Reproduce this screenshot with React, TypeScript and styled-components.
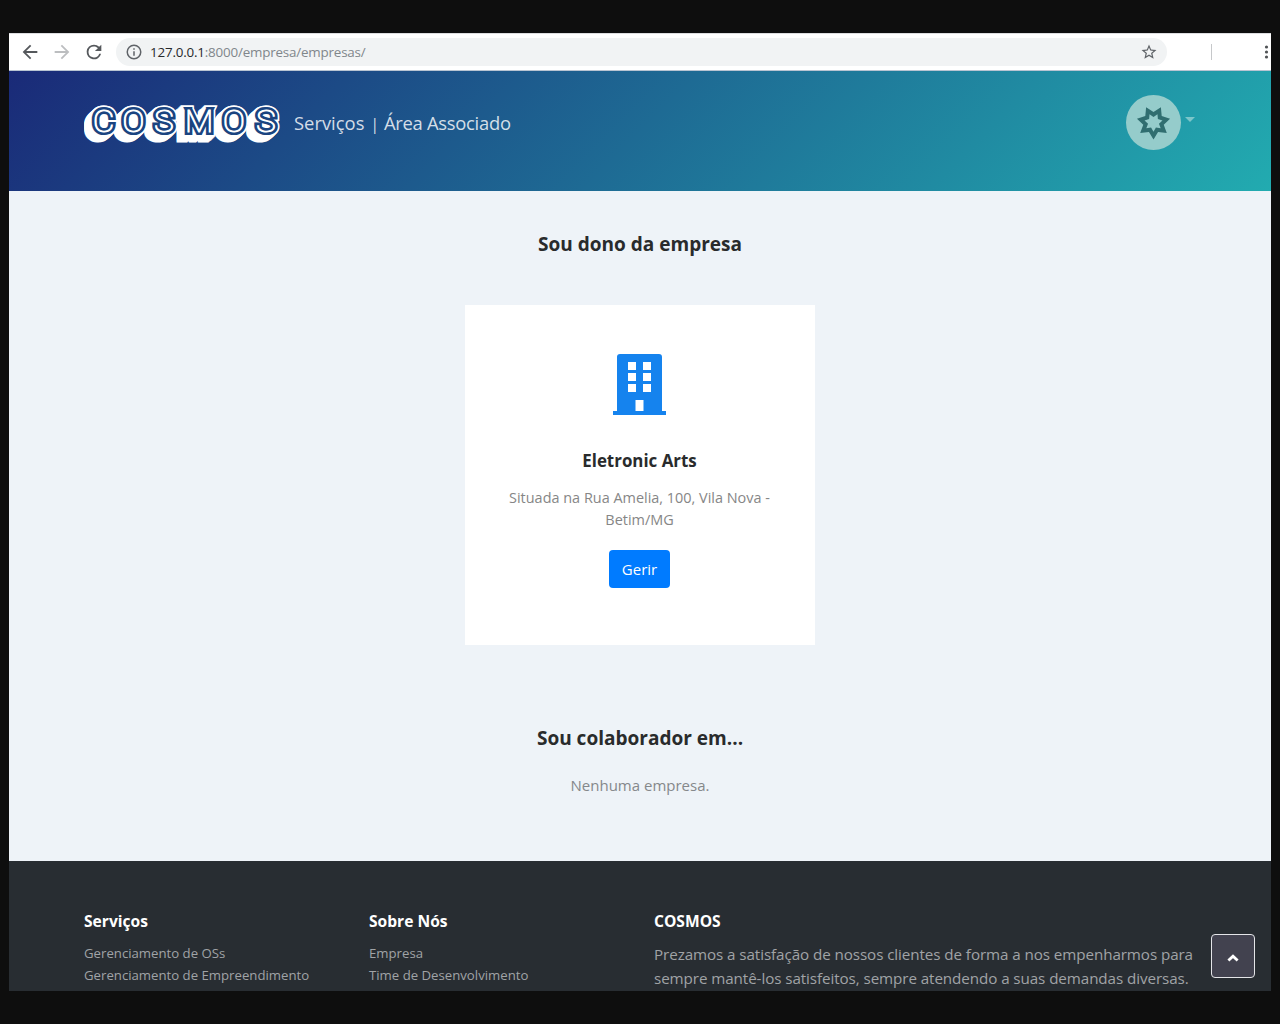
import React from "react";
import styled, { createGlobalStyle } from "styled-components";

const GlobalStyle = createGlobalStyle`
  *, *::before, *::after { box-sizing: border-box; }
  html, body { margin: 0; padding: 0; background: #0e0e0e; }
  body { font-family: "Open Sans", "Noto Sans", sans-serif; overflow: hidden; }
  h2, h3, h4, p, ul { margin: 0; padding: 0; font-weight: inherit; }
  ul { list-style: none; }
  a { color: inherit; text-decoration: none; }
  svg { display: block; }
`;

const Desktop = styled.div`
  height: 1024px;
  padding: 33px 9px;
  background: #0e0e0e;
`;

const Browser = styled.div`
  position: relative;
  display: flex;
  flex-direction: column;
  height: 958px;
  overflow: hidden;
  background: #eef3f8;
`;

const Toolbar = styled.div`
  display: flex;
  align-items: center;
  flex: none;
  height: 38px;
  padding-left: 10px;
  background: #fff;
  border-top: 1px solid #dcdddf;
  border-bottom: 1px solid #b9c4d2;
`;

const NavButton = styled.span<{ $muted?: boolean }>`
  width: 32px;
  color: ${(p) => (p.$muted ? "#bcbec0" : "#55585c")};
`;

const AddressBar = styled.div`
  display: flex;
  align-items: center;
  width: 1051px;
  height: 28px;
  margin-left: 1px;
  padding: 0 9px;
  border-radius: 14px;
  background: #f1f3f4;
  color: #5f6368;
`;

const Url = styled.span`
  flex: 1;
  margin-left: 7px;
  font-size: 13.4px;
  line-height: 20px;
  color: #80868b;
  letter-spacing: -0.19px;
`;

const Host = styled.span`
  color: #27292d;
`;

const Divider = styled.span`
  width: 1px;
  height: 16px;
  margin: 0 49px 0 44px;
  background: #c6c8ca;
`;

const Header = styled.header`
  display: flex;
  align-items: flex-start;
  flex: none;
  height: 120px;
  padding: 24px 76px 0 75px;
  background: linear-gradient(135deg, #1a2a78 0%, #22abb0 100%);
`;

const Brand = styled.a`
  margin-top: 6px;
`;

const HeaderNav = styled.nav`
  display: flex;
  align-items: center;
  flex: 1;
  margin: 13px 0 0 10px;
  font-size: 18.4px;
  line-height: 28px;
  color: rgba(255, 255, 255, 0.82);
`;

const NavLink = styled.a<{ $tight?: boolean }>`
  letter-spacing: ${(p) => (p.$tight ? "-0.28px" : "0")};
`;

const NavSeparator = styled.span`
  margin: 2px 5px 0 6px;
  font-size: 15.5px;
`;

const Account = styled.div`
  display: flex;
  align-items: center;
  gap: 4px;
`;

const Avatar = styled.div`
  display: flex;
  align-items: center;
  justify-content: center;
  width: 55px;
  height: 55px;
  border-radius: 50%;
  background: #95cccb;
`;

const Caret = styled.span`
  margin-top: -6px;
  border: 5px solid transparent;
  border-top-color: #7cc6ca;
  border-bottom: 0;
`;

const Main = styled.main`
  display: flex;
  flex-direction: column;
  align-items: center;
  flex: none;
  height: 670px;
  padding-top: 38px;
  background: #eef3f8;
`;

const SectionTitle = styled.h2`
  font-size: 19.05px;
  line-height: 30px;
  font-weight: 700;
  color: #292b2c;
`;

const Card = styled.article`
  display: flex;
  flex-direction: column;
  align-items: center;
  width: 350px;
  height: 340px;
  margin: 46px 0 78px;
  padding: 49px 41px 0 40px;
  background: #fff;
  text-align: center;
`;

const CardTitle = styled.h3`
  margin: 33px 0 13px;
  font-size: 16.9px;
  line-height: 26px;
  font-weight: 700;
  color: #292b2c;
`;

const CardText = styled.p`
  font-size: 14.45px;
  line-height: 22px;
  color: #868686;
  white-space: nowrap;
`;

const Button = styled.button`
  height: 38px;
  width: 61px;
  margin-top: 19px;
  padding: 0;
  border: 0;
  border-radius: 4px;
  background: #007bff;
  color: #fff;
  font: 400 15px/38px "Open Sans", sans-serif;
`;

const EmptyNote = styled.p`
  margin-top: 20px;
  font-size: 15px;
  line-height: 24px;
  color: #85888b;
`;

const Footer = styled.footer`
  display: grid;
  grid-template-columns: 285px 285px 1fr;
  flex: 1;
  padding: 48px 70px 0 75px;
  background: #282d32;
  color: #a0a3a6;
`;

const FooterTitle = styled.h4`
  margin-bottom: 9px;
  font-size: 15.6px;
  line-height: 24px;
  font-weight: 700;
  color: #fff;
`;

const FooterLink = styled.li`
  font-size: 13.2px;
  line-height: 22px;
`;

const FooterText = styled.p`
  font-size: 15.2px;
  line-height: 24px;
  letter-spacing: -0.08px;
  white-space: nowrap;
`;

const ScrollTop = styled.button`
  position: absolute;
  right: 16px;
  bottom: 13px;
  display: flex;
  align-items: center;
  justify-content: center;
  width: 44px;
  height: 44px;
  padding: 4px 0 0;
  border: 1px solid #e4e5e8;
  border-radius: 4px;
  background: #42424f;
`;

const LogoWord = styled.text`
  font-family: Roboto, sans-serif;
  font-weight: 100;
  font-size: 31px;
`;

function Logo() {
  const depth = Array.from({ length: 14 }, (_, i) => i / 2);
  return (
    <svg width="200" height="46" viewBox="0 0 200 46" strokeLinejoin="miter" strokeMiterlimit="2">
      <defs>
        <LogoWord id="word" x="8.2 35.5 64.9 93.3 128.6 159.3" y="31">COSMOS</LogoWord>
      </defs>
      <g transform="scale(1.08 1)">
        {depth.map((d) => (
          <use key={d} href="#word" x={-d * 0.92} y={d * 0.9} fill="#fff" stroke="#fff" strokeWidth="9.2" />
        ))}
        <use href="#word" fill="#1b4480" stroke="#1b4480" strokeWidth="6.2" />
        <use href="#word" fill="#fff" stroke="#fff" strokeWidth="1" />
      </g>
    </svg>
  );
}

const starPoints = (outer: number, inner: number) =>
  Array.from({ length: 14 }, (_, i) => {
    const r = i % 2 ? inner : outer;
    const a = Math.PI / 2 + (i * Math.PI) / 7;
    return `${(r * Math.cos(a)).toFixed(2)},${(r * Math.sin(a)).toFixed(2)}`;
  }).join(" ");

function StarBurst() {
  return (
    <svg width="37" height="37" viewBox="-18.5 -18.5 37 37">
      <polygon points={starPoints(17, 10.5)} fill="#306e70" />
      <polygon points={starPoints(9.2, 5.6)} fill="#95cccb" />
    </svg>
  );
}

function Building() {
  return (
    <svg width="53" height="61" viewBox="0 0 53 61">
      <path
        fill="#1583ee"
        fillRule="evenodd"
        d="M0 61v-4h4V3a3 3 0 0 1 3-3h39a3 3 0 0 1 3 3v54h4v4zM15 8v8h8V8zM30 8v8h8V8zM15 19v8h8v-8zM30 19v8h8v-8zM15 30v8h8v-8zM30 30v8h8v-8zM22.500 46v11h8V46z"
      />
    </svg>
  );
}

const Icon = ({ d, size = 18 }: { d: string; size?: number }) => (
  <svg width={size} height={size} viewBox="0 0 24 24" fill="currentColor">
    <path d={d} />
  </svg>
);

const BACK = "M20 11H7.83l5.59-5.59L12 4l-8 8 8 8 1.41-1.41L7.83 13H20v-2z";
const FORWARD = "M12 4l-1.41 1.41L16.17 11H4v2h12.17l-5.58 5.59L12 20l8-8z";
const RELOAD =
  "M17.65 6.35A7.96 7.96 0 0 0 12 4a8 8 0 1 0 7.73 10h-2.08A6 6 0 1 1 12 6c1.66 0 3.14.69 4.22 1.78L13 11h7V4l-2.35 2.35z";
const INFO =
  "M11 7h2v2h-2zm0 4h2v6h-2zm1-9a10 10 0 1 0 0 20 10 10 0 0 0 0-20zm0 18a8 8 0 1 1 0-16 8 8 0 0 1 0 16z";
const STAR =
  "M22 9.24l-7.19-.62L12 2 9.19 8.63 2 9.24l5.46 4.73L5.82 21 12 17.27 18.18 21l-1.63-7.03L22 9.24zM12 15.4l-3.76 2.27 1-4.28-3.32-2.88 4.38-.38L12 6.1l1.71 4.04 4.38.38-3.32 2.88 1 4.28L12 15.4z";

const services = ["Gerenciamento de OSs", "Gerenciamento de Empreendimento"];
const about = ["Empresa", "Time de Desenvolvimento"];

export default function App() {
  return (
    <>
      <GlobalStyle />
      <Desktop>
        <Browser>
          <Toolbar>
            <NavButton><Icon d={BACK} size={22} /></NavButton>
            <NavButton $muted><Icon d={FORWARD} size={22} /></NavButton>
            <NavButton><Icon d={RELOAD} size={22} /></NavButton>
            <AddressBar>
              <Icon d={INFO} size={18} />
              <Url><Host>127.0.0.1</Host>:8000/empresa/empresas/</Url>
              <Icon d={STAR} size={18} />
            </AddressBar>
            <Divider />
            <svg width="10" height="16" viewBox="0 0 10 16" fill="#505356">
              <circle cx="5.500" cy="3" r="1.6" />
              <circle cx="5.500" cy="8" r="1.6" />
              <circle cx="5.500" cy="13" r="1.6" />
            </svg>
          </Toolbar>
          <Header>
            <Brand href="#"><Logo /></Brand>
            <HeaderNav>
              <NavLink href="#">Serviços</NavLink>
              <NavSeparator>|</NavSeparator>
              <NavLink href="#" $tight>Área Associado</NavLink>
            </HeaderNav>
            <Account>
              <Avatar><StarBurst /></Avatar>
              <Caret />
            </Account>
          </Header>
          <Main>
            <SectionTitle>Sou dono da empresa</SectionTitle>
            <Card>
              <Building />
              <CardTitle>Eletronic Arts</CardTitle>
              <CardText>Situada na Rua Amelia, 100, Vila Nova -<br />Betim/MG</CardText>
              <Button>Gerir</Button>
            </Card>
            <SectionTitle>Sou colaborador em...</SectionTitle>
            <EmptyNote>Nenhuma empresa.</EmptyNote>
          </Main>
          <Footer>
            <section>
              <FooterTitle>Serviços</FooterTitle>
              <ul>{services.map((s) => <FooterLink key={s}>{s}</FooterLink>)}</ul>
            </section>
            <section>
              <FooterTitle>Sobre Nós</FooterTitle>
              <ul>{about.map((s) => <FooterLink key={s}>{s}</FooterLink>)}</ul>
            </section>
            <section>
              <FooterTitle>COSMOS</FooterTitle>
              <FooterText>
                Prezamos a satisfação de nossos clientes de forma a nos empenharmos para<br />
                sempre mantê-los satisfeitos, sempre atendendo a suas demandas diversas.
              </FooterText>
            </section>
          </Footer>
          <ScrollTop aria-label="Topo">
            <svg width="12" height="8" viewBox="0 0 12 8" fill="none" stroke="#fff" strokeWidth="2.8">
              <path d="M1.4 6.6 6 2.2l4.6 4.4" />
            </svg>
          </ScrollTop>
        </Browser>
      </Desktop>
    </>
  );
}
